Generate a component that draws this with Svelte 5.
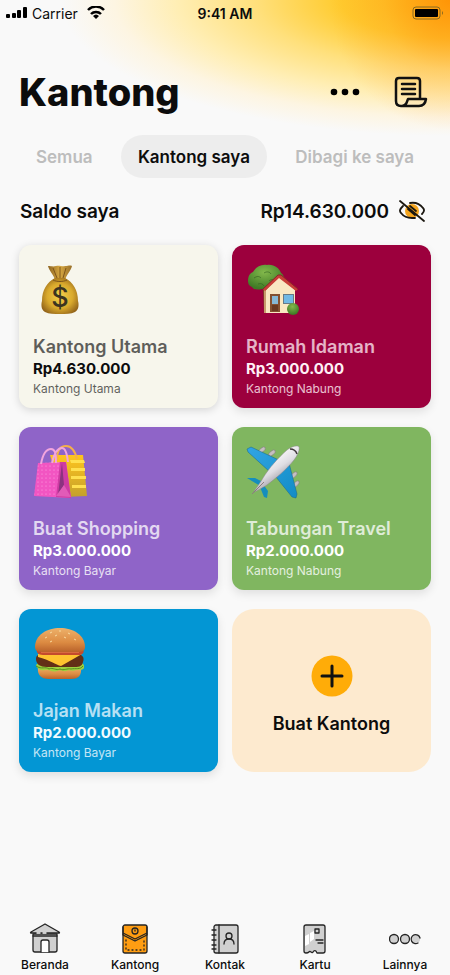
<script lang="ts">
	interface Pocket {
		name: string;
		amount: number;
		type: string;
		icon: string;
		theme: string;
	}

	const pockets: Pocket[] = [
		{ name: 'Kantong Utama', amount: 4630000, type: 'Kantong Utama', icon: 'money', theme: 'cream' },
		{ name: 'Rumah Idaman', amount: 3000000, type: 'Kantong Nabung', icon: 'house', theme: 'maroon' },
		{ name: 'Buat Shopping', amount: 3000000, type: 'Kantong Bayar', icon: 'bags', theme: 'purple' },
		{ name: 'Tabungan Travel', amount: 2000000, type: 'Kantong Nabung', icon: 'plane', theme: 'green' },
		{ name: 'Jajan Makan', amount: 2000000, type: 'Kantong Bayar', icon: 'burger', theme: 'blue' }
	];

	const tabs = ['Semua', 'Kantong saya', 'Dibagi ke saya'];
	const navItems = ['Beranda', 'Kantong', 'Kontak', 'Kartu', 'Lainnya'];

	let activeTab = $state('Kantong saya');
	let hidden = $state(false);

	let total = $derived(pockets.reduce((sum, pocket) => sum + pocket.amount, 0));

	function rupiah(value: number) {
		if (hidden) return 'Rp•••••••';
		return 'Rp' + value.toString().replace(/\B(?=(\d{3})+$)/g, '.');
	}
</script>

{#snippet pocketIcon(icon: string)}
	<svg class="pocket-icon" viewBox="0 0 54 54" aria-hidden="true">
		{#if icon === 'money'}
			<defs>
				<radialGradient id="sack" cx="50%" cy="50%" r="58%">
					<stop offset="0" stop-color="#f4d04c" />
					<stop offset="0.6" stop-color="#d9a92c" />
					<stop offset="1" stop-color="#94651a" />
				</radialGradient>
				<linearGradient id="neck" x1="0" x2="1">
					<stop offset="0" stop-color="#8e6522" />
					<stop offset="0.5" stop-color="#d6a740" />
					<stop offset="1" stop-color="#99702a" />
				</linearGradient>
			</defs>
			<path d="M15 3c3 0 5 1 8 0 4-1 6 1 9 0 3 0 5-1 7 0-1 5-6 9-7 14H22c-1-5-6-9-7-14z" fill="url(#neck)" />
			<path d="M22 15h10c8 4 13 12 13 23 1 3 1 9-3 11-4 2-9 2-15 2s-11 0-15-2c-4-2-4-8-3-11 0-11 5-19 13-23z" fill="url(#sack)" />
			<path d="M20 5l4 10M27 4v11M33 5l-3 10M20 17c4 2 10 2 14 0" fill="none" stroke="#7d541a" stroke-width="1" />
			<text x="27" y="44" text-anchor="middle" class="dollar">$</text>
		{:else if icon === 'house'}
			<defs>
				<radialGradient id="leaf" cx="45%" cy="30%" r="65%">
					<stop offset="0" stop-color="#83b94c" />
					<stop offset="1" stop-color="#3f7a25" />
				</radialGradient>
			</defs>
			<path d="M17 24h6v26h-5z" fill="#7a4a25" />
			<path d="M2 18c0-5 2-8 5-9 3-5 8-8 14-7 7-1 12 3 14 8 3 2 4 6 2 9-2 4-6 4-10 5-4 4-8 3-11 2-4 1-8 1-10-2-3-1-4-3-4-6z" fill="url(#leaf)" />
			<path d="M8 15c3-2 5-2 7 0M18 10c3-2 6-1 7 1M12 21c3-1 5 0 6 2M23 18c2-2 5-2 7 0" fill="none" stroke="#315f1f" stroke-width="1" opacity="0.6" />
			<path d="M20 27l13-14 16 14v23H20z" fill="#f9e8c2" />
			<path d="M20 26v24h-2V27z" fill="#c79c6c" />
			<path d="M17 26l15-14h3l17 14-2 2-17-13-14 13z" fill="#c83e38" />
			<path d="M17 26l15-14h3l17 14" fill="none" stroke="#8b2528" stroke-width="1" />
			<rect x="24" y="31" width="10" height="18" fill="#84512e" />
			<rect x="26" y="33" width="6" height="8" fill="#86b9d4" />
			<rect x="26" y="42" width="6" height="6" fill="#693a20" />
			<rect x="37" y="31" width="11" height="10" fill="#667b86" />
			<rect x="38" y="32" width="9" height="8" fill="#70b9e5" />
			<circle cx="47" cy="46" r="6" fill="url(#leaf)" />
		{:else if icon === 'bags'}
			<defs>
				<linearGradient id="gold" x2="0" y2="1">
					<stop offset="0" stop-color="#ffc51d" />
					<stop offset="1" stop-color="#c4a02c" />
				</linearGradient>
				<pattern id="dots" width="4" height="4" patternUnits="userSpaceOnUse">
					<circle cx="1" cy="1" r="0.6" fill="#ffa2e2" />
				</pattern>
			</defs>
			<path d="M17 10h33l4 41-24 1z" fill="url(#gold)" />
			<path d="M37 15h14l1 3H38zM38 23h14v3H38zM38 31h15v3H38zM39 40h14v3H39z" fill="#ffe04f" />
			<path d="M24 15C24 5 28 1 33 1s9 5 11 13" fill="none" stroke="#f4b04a" stroke-width="2" />
			<path d="M5 18l28-1 5 36-37-2z" fill="#f255c2" />
			<path d="M5 18l22-1-3 35-23-1z" fill="url(#dots)" />
			<path d="M27 17h6l5 36-15-1z" fill="#cf3ba3" />
			<path d="M29 18l-4 32 6-10z" fill="#8c3280" />
			<path d="M31 40l7 12-15-1z" fill="#e15bb8" />
			<path d="M8 19C10 8 14 4 18 4c4 0 5 4 5 14M19 18c2-9 5-15 10-15 3 0 5 5 6 14" fill="none" stroke="#f2a5dd" stroke-width="2" />
		{:else if icon === 'plane'}
			<defs>
				<linearGradient id="hull" x1="0.3" y1="0.2" x2="0.7" y2="0.8">
					<stop offset="0" stop-color="#ffffff" />
					<stop offset="0.5" stop-color="#dfdde3" />
					<stop offset="1" stop-color="#8c8790" />
				</linearGradient>
				<linearGradient id="wing" x1="0" y1="0" x2="1" y2="1">
					<stop offset="0" stop-color="#31a5e4" />
					<stop offset="1" stop-color="#128cc6" />
				</linearGradient>
			</defs>
			<g fill="#c6bfc0" stroke="#777477" stroke-width="0.5">
				<ellipse cx="16" cy="5" rx="4" ry="2" transform="rotate(-40 16 5)" />
				<ellipse cx="26" cy="8" rx="4" ry="2" transform="rotate(-40 26 8)" />
				<ellipse cx="48" cy="30" rx="4" ry="2" transform="rotate(-45 48 30)" />
				<ellipse cx="50" cy="39" rx="4" ry="2" transform="rotate(-45 50 39)" />
			</g>
			<path d="M1 4l4-2 30 14-11 11L2 7zM43 18l8 31-1 4-4-1-16-20z" fill="url(#wing)" stroke="#17658b" stroke-width="0.5" />
			<path d="M1 33h8l10 5-3 4zM17 39l5 7-1 7-3-1-4-10z" fill="#158ebd" />
			<path d="M8 47c-1 0 7-10 9-14C23 23 33 12 41 5c5-4 11-5 12-3s-1 8-5 13C41 24 29 34 21 40c-5 3-12 7-13 7z" fill="url(#hull)" stroke="#8b858b" stroke-width="0.5" />
			<path d="M44 4c3 0 6 2 7 5" fill="none" stroke="#40383c" stroke-width="1.5" />
			<path d="M6 49l12-12" stroke="#8d7b81" stroke-width="1" />
		{:else}
			<defs>
				<linearGradient id="bun" x2="0" y2="1">
					<stop offset="0" stop-color="#edb16a" />
					<stop offset="0.6" stop-color="#dc8b42" />
					<stop offset="1" stop-color="#b9622b" />
				</linearGradient>
			</defs>
			<path d="M5 40h43c1 9-3 12-10 12H16C8 52 4 48 5 40z" fill="url(#bun)" />
			<path d="M3 38c4-4 8-1 12-2h27c5-2 10 0 9 5-2 3-5 1-8 2-4 2-6-1-10 1-3 1-5-2-9 0-5 2-8-2-12-1-5 1-8-1-9-5z" fill="#9dd13f" />
			<path d="M3 39c6 4 9 0 13 3 4-2 7 2 11 0 4 2 7-1 11 0 5-1 9 1 12-3" fill="none" stroke="#568e20" stroke-width="1" />
			<path d="M3 32c0-4 3-5 7-5h33c6 0 9 3 7 8-1 5-5 5-10 5H14c-7 0-11-3-11-8z" fill="#632f16" />
			<path d="M5 27h44L28 39C23 38 17 33 5 30z" fill="#ffc32f" />
			<path d="M4 22h46c2 4-1 6-5 6H10c-5 0-7-3-6-6z" fill="#c44a2d" />
			<path d="M8 25h38" stroke="#ed8c53" stroke-width="1" />
			<path d="M2 20C2 8 14 1 27 1s25 7 25 19c0 4-3 5-7 5H10c-5 0-8-1-8-5z" fill="url(#bun)" />
			<path d="M17 6l2-1M26 4h2M35 6l2 1M12 11l2-1M22 9l2-1M31 10l2 1M41 12l2 1M17 15l2-1" stroke="#f9dba0" stroke-width="1" />
		{/if}
	</svg>
{/snippet}

{#snippet navIcon(item: string)}
	<svg class="nav-icon" viewBox="0 0 32 32" aria-hidden="true" fill="none" stroke="#242424" stroke-width="1.3" stroke-linecap="round" stroke-linejoin="round">
		{#if item === 'Beranda'}
			<path d="M4 11h24v16q0 2-2 2H6q-2 0-2-2z" fill="#d0d0d0" />
			<path d="M16 1L2 9q-1 1 0 1h28q1 0 0-1z" fill="#d0d0d0" />
			<path d="M4 13h24" />
			<path d="M8 10h3M14 10h3" stroke="#f9f9f9" />
			<path d="M12 29V19q0-2 2-2h4q2 0 2 2v10" fill="#fff" />
		{:else if item === 'Kantong'}
			<rect x="4" y="2" width="24" height="28" rx="2" fill="#ff9d12" />
			<path d="M4 4v8l12 6 12-6V4M4 10l12 6 12-6" />
			<circle cx="16" cy="8" r="3" />
			<path d="M16 7v1" />
			<path d="M7 17v10h18V17" stroke-dasharray="1 3" />
		{:else if item === 'Kontak'}
			<rect x="5" y="2" width="24" height="28" rx="2" fill="#d0d0d0" />
			<path d="M10 2v28M3 7h4M3 12h4M3 17h4M3 22h4M3 26h4" />
			<circle cx="20" cy="13" r="3" />
			<path d="M15 21c0-3 2-5 5-5s5 2 5 5" />
		{:else if item === 'Kartu'}
			<path d="M7 2h17q2 0 2 2v24q0 2-2 2h-5c-1-3-4-3-5 0-2-2-4 0-7 0q-2 0-2-2V4q0-2 2-2z" fill="#d0d0d0" stroke="none" />
			<path d="M6 13l4-2v10l-4 2zM11 10l4-2v8l-4 3z" fill="#fff" stroke="none" />
			<path d="M7 2h17q2 0 2 2v24q0 2-2 2h-6c-1-3-3-3-4-1-1 2-3-2-4 0-1 1-2 1-3 1q-2 0-2-2V4q0-2 2-2z" />
			<path d="M16 6h4v4h-4zM17 17h7M19 20h5" />
		{:else}
			<g fill="#d0d0d0">
				<circle cx="5" cy="16" r="4.500" />
				<circle cx="16" cy="16" r="4.500" />
				<circle cx="27" cy="16" r="4" stroke="none" />
			</g>
			<path d="M31 15a4.500 4.500 0 1 0-2 5" />
		{/if}
	</svg>
{/snippet}

<div class="page">
	<div class="status-bar">
		<div class="carrier">
			<svg width="22" height="14" viewBox="0 0 22 14" aria-hidden="true">
				<rect x="0" y="8" width="4" height="4" rx="1" />
				<rect x="6" y="7" width="4" height="5" rx="1" />
				<rect x="11" y="4" width="4" height="8" rx="1" />
				<rect x="17" y="1" width="4" height="11" rx="1" />
			</svg>
			<span>Carrier</span>
			<svg class="wifi" width="20" height="14" viewBox="0 0 20 14" aria-hidden="true">
				<path d="M2 4a11 11 0 0 1 16 0M5 8a7 7 0 0 1 10 0" fill="none" stroke="#000" stroke-width="2.5" />
				<path d="M7 10q3-3 6 0l-3 3z" />
			</svg>
		</div>
		<time>9:41 AM</time>
		<svg class="battery" width="32" height="14" viewBox="0 0 32 14" aria-hidden="true">
			<rect x="1" y="1" width="27" height="12" rx="3" fill="none" stroke="#8a6a20" />
			<rect x="3" y="3" width="23" height="8" rx="1" />
			<path d="M30 5q2 2 0 4z" fill="#8a6a20" />
		</svg>
	</div>

	<header>
		<h1>Kantong</h1>
		<div class="actions">
			<button type="button" aria-label="Menu">
				<svg width="30" height="8" viewBox="0 0 30 8">
					<circle cx="4" cy="4" r="3.300" />
					<circle cx="15" cy="4" r="3.300" />
					<circle cx="26" cy="4" r="3.300" />
				</svg>
			</button>
			<button type="button" aria-label="Riwayat">
				<svg width="34" height="32" viewBox="0 0 34 32" fill="none" stroke="#111" stroke-width="2.5" stroke-linecap="round" stroke-linejoin="round">
					<path d="M26 22V5q0-3-3-3H5Q2 2 2 5v20q0 5 5 5h18q6 0 7-7H14c-1 2-1 7-6 7" />
					<path d="M8 8h13M8 13h13M8 18h13" />
				</svg>
			</button>
		</div>
	</header>

	<div class="tabs" role="tablist">
		{#each tabs as tab (tab)}
			<button
				type="button"
				role="tab"
				aria-selected={activeTab === tab}
				class:active={activeTab === tab}
				onclick={() => (activeTab = tab)}
			>
				{tab}
			</button>
		{/each}
	</div>

	<div class="balance">
		<h2>Saldo saya</h2>
		<div class="total">
			<span>{rupiah(total)}</span>
			<button type="button" aria-label="Sembunyikan saldo" onclick={() => (hidden = !hidden)}>
				<svg width="28" height="24" viewBox="0 0 28 24" fill="none" stroke="#1b1710" stroke-width="1.8" stroke-linecap="round">
					<circle cx="14" cy="12" r="7" fill="#f5a51d" stroke="none" />
					<path d="M5 7c-3 3-4 5-2 7 3 4 7 5 11 5h3M12 4c6-1 10 1 13 5 2 2 1 4-1 6" />
					<path d="M12 7l6 5M10 10l7 6" />
					<path d="M2 2l24 20" />
				</svg>
			</button>
		</div>
	</div>

	<main>
		{#each pockets as pocket (pocket.name)}
			<a href="#{pocket.icon}" class="card {pocket.theme}">
				{@render pocketIcon(pocket.icon)}
				<h3>{pocket.name}</h3>
				<strong>{rupiah(pocket.amount)}</strong>
				<small>{pocket.type}</small>
			</a>
		{/each}
		<button type="button" class="create">
			<svg width="42" height="42" viewBox="0 0 42 42" aria-hidden="true">
				<circle cx="21" cy="21" r="20.500" fill="#ffac08" />
				<path d="M21 11v20M11 21h20" stroke="#111" stroke-width="3" stroke-linecap="round" />
			</svg>
			<span>Buat Kantong</span>
		</button>
	</main>

	<nav>
		{#each navItems as item (item)}
			<a href="#{item.toLowerCase()}" aria-current={item === 'Kantong' ? 'page' : undefined}>
				{@render navIcon(item)}
				<span>{item}</span>
			</a>
		{/each}
	</nav>
</div>

<style>
	:global(body) {
		margin: 0;
		background: #f9f9f9;
	}

	.page {
		box-sizing: border-box;
		min-height: 100vh;
		display: flex;
		flex-direction: column;
		font-family: Inter, 'Liberation Sans', sans-serif;
		color: #0c0c0c;
		background:
			radial-gradient(ellipse 120px 130px at 100% 0, rgba(255, 130, 0, 0.65), rgba(255, 150, 30, 0.25) 55%, transparent),
			radial-gradient(
				ellipse 390px 136px at 100% 0,
				#ffb914 0%,
				#ffcb2e 28%,
				#ffe07c 50%,
				#ffeeb4 70%,
				#fdf5e2 86%,
				rgba(249, 249, 249, 0) 100%
			),
			#f9f9f9;
	}

	h1,
	h2,
	h3 {
		margin: 0;
	}

	button {
		border: none;
		padding: 0;
		background: none;
		font: inherit;
		color: inherit;
		cursor: pointer;
	}

	a {
		color: inherit;
		text-decoration: none;
	}

	svg {
		display: block;
		flex: none;
	}

	.status-bar {
		display: grid;
		grid-template-columns: 1fr auto 1fr;
		align-items: center;
		height: 26px;
		padding: 0 6px;
		font-size: 14px;
	}

	.carrier {
		display: flex;
		align-items: center;
		gap: 4px;
	}

	.wifi {
		margin-left: 4px;
	}

	time {
		font-weight: 600;
	}

	.battery {
		justify-self: end;
	}

	header {
		display: flex;
		justify-content: space-between;
		align-items: center;
		margin-top: 36px;
		padding: 0 22px 0 19px;
		height: 60px;
	}

	h1 {
		font-size: 38px;
		font-weight: 800;
		line-height: 48px;
	}

	.actions {
		display: flex;
		align-items: center;
		gap: 34px;
	}

	.tabs {
		display: flex;
		justify-content: space-between;
		margin-top: 13px;
		padding: 0 19px;
	}

	.tabs button {
		height: 43px;
		padding: 0 17px;
		border-radius: 22px;
		font-size: 17px;
		font-weight: 600;
		color: #bdbdbd;
	}

	.tabs button.active {
		background: #ededed;
		color: #0c0c0c;
	}

	.balance {
		display: flex;
		justify-content: space-between;
		align-items: center;
		height: 24px;
		margin: 21px 24px 22px 20px;
		font-size: 19px;
		font-weight: 600;
	}

	h2 {
		font: inherit;
	}

	.total {
		display: flex;
		align-items: center;
		gap: 9px;
	}

	main {
		display: grid;
		grid-template-columns: 1fr 1fr;
		gap: 19px 14px;
		padding: 0 19px 24px;
	}

	.card {
		display: flex;
		flex-direction: column;
		align-items: flex-start;
		padding: 18px 14px 10px;
		border-radius: 12px;
		box-shadow: 0 4px 10px rgba(0, 0, 0, 0.1);
	}

	.pocket-icon {
		width: 54px;
		height: 54px;
		margin-bottom: 18px;
	}

	.dollar {
		font-size: 27px;
		font-weight: 500;
		fill: #3c3420;
	}

	h3 {
		font-size: 18px;
		font-weight: 600;
		line-height: 24px;
		opacity: 0.75;
	}

	.card strong {
		font-size: 15px;
		font-weight: 700;
		line-height: 20px;
	}

	.card small {
		font-size: 12px;
		line-height: 19px;
		opacity: 0.8;
	}

	.cream {
		background: #f7f6ec;
		color: #0c0c0c;
		box-shadow: 0 2px 8px rgba(0, 0, 0, 0.15);
	}

	.cream h3,
	.cream small {
		opacity: 0.65;
	}

	.maroon {
		background: #9c003d;
		color: #fff0f6;
	}

	.purple {
		background: #8f64c8;
		color: #fff;
	}

	.green {
		background: #80b660;
		color: #fff;
	}

	.blue {
		background: #0396d4;
		color: #f2fbff;
	}

	.create {
		display: flex;
		flex-direction: column;
		justify-content: center;
		align-items: center;
		gap: 16px;
		padding-top: 8px;
		border-radius: 22px;
		background: #fdeacf;
		font-size: 18px;
		font-weight: 600;
	}

	nav {
		display: grid;
		grid-template-columns: repeat(5, 1fr);
		margin-top: auto;
		padding-bottom: 2px;
	}

	nav a {
		display: flex;
		flex-direction: column;
		align-items: center;
		gap: 2px;
		font-size: 12px;
		font-weight: 500;
		line-height: 16px;
	}

	.nav-icon {
		width: 32px;
		height: 32px;
	}
</style>
